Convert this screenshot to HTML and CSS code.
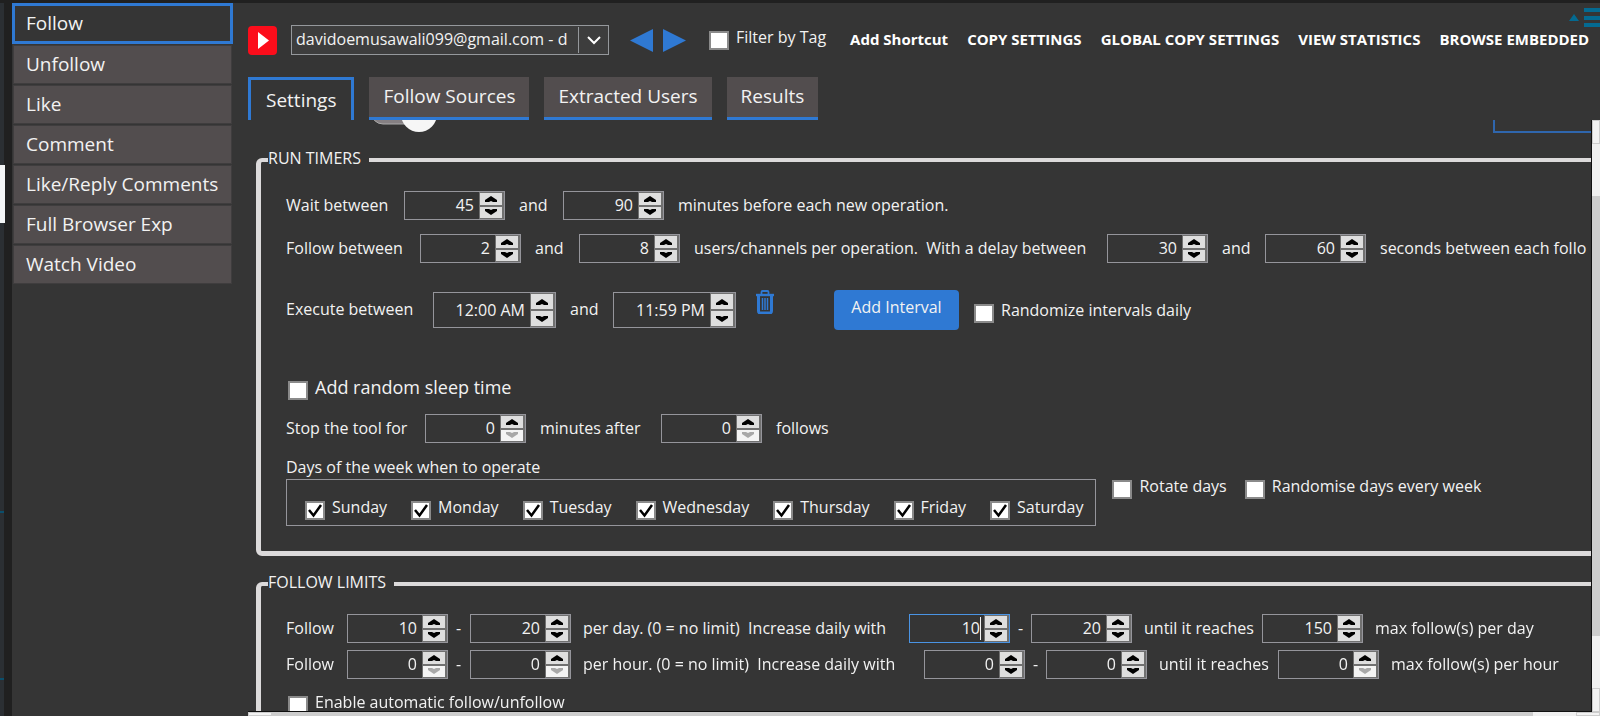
FILE: index.html
```html
<!DOCTYPE html>
<html lang="en">
<head>
<meta charset="utf-8">
<title>Follow settings</title>
<link rel="stylesheet" href="styles.css">
</head>
<body>
<div class="window">
  <div class="edge"><i class="edge-tab"></i><i class="edge-mark"></i><i class="edge-mark edge-mark-low"></i></div>
  <nav class="tools">
    <button class="tool tool-active">Follow</button>
    <button class="tool">Unfollow</button>
    <button class="tool">Like</button>
    <button class="tool">Comment</button>
    <button class="tool">Like/Reply Comments</button>
    <button class="tool">Full Browser Exp</button>
    <button class="tool">Watch Video</button>
  </nav>
  <main class="main">
    <header class="bar">
      <svg class="logo" viewBox="0 0 29 29"><rect width="29" height="29" rx="4" fill="#fc0d1b"/><path d="M10 6l11 8.500-11 8.500z" fill="#fff"/></svg>
      <select class="account" aria-label="Account"><option>davidoemusawali099@gmail.com - d</option></select>
      <div class="arrows">
        <button class="plain" aria-label="Previous account"><svg width="23" height="23" viewBox="0 0 23 23"><path d="M23 0v23L0 11.500z" fill="#2f79d3"/></svg></button>
        <button class="plain" aria-label="Next account"><svg width="23" height="23" viewBox="0 0 23 23"><path d="M0 0v23l23-11.500z" fill="#2f79d3"/></svg></button>
      </div>
      <label class="check check-filter"><input type="checkbox"><span>Filter by Tag</span></label>
      <div class="actions">
        <button class="plain">Add Shortcut</button>
        <button class="plain">COPY SETTINGS</button>
        <button class="plain">GLOBAL COPY SETTINGS</button>
        <button class="plain">VIEW STATISTICS</button>
        <button class="plain">BROWSE EMBEDDED</button>
      </div>
      <button class="plain menu" aria-label="Menu"><svg width="31" height="20" viewBox="0 0 31 20"><path d="M0 13l5-7 5 7zM15 0h16v4H15zM15 8h16v4H15zM15 15h16v4H15z" fill="#046a91"/></svg></button>
    </header>
    <div class="tabs">
      <button class="tab tab-active">Settings</button>
      <button class="tab">Follow Sources</button>
      <button class="tab">Extracted Users</button>
      <button class="tab">Results</button>
    </div>
    <div class="pane">
      <div class="content">
        <div class="above">
          <svg width="70" height="14" viewBox="0 0 70 14"><rect x="0" y="-20" width="50" height="24" rx="12" fill="#858083" stroke="#aaa"/><circle cx="48" cy="-6" r="18" fill="#f6f6f6"/></svg>
          <div class="box-end"></div>
        </div>
        <fieldset class="group timers">
          <legend>RUN TIMERS</legend>
          <div class="row row-wait">
            <label for="w1">Wait between</label><span class="spin"><input id="w1" value="45"><button aria-label="Up"></button><button class="down" aria-label="Down"></button></span>
            <label for="w2">and</label><span class="spin"><input id="w2" value="90"><button aria-label="Up"></button><button class="down" aria-label="Down"></button></span>
            <span>minutes before each new operation.</span>
          </div>
          <div class="row row-users">
            <label for="u1">Follow between</label><span class="spin"><input id="u1" value="2"><button aria-label="Up"></button><button class="down" aria-label="Down"></button></span>
            <label for="u2">and</label><span class="spin"><input id="u2" value="8"><button aria-label="Up"></button><button class="down" aria-label="Down"></button></span>
            <label for="u3">users/channels per operation.&nbsp; With a delay between</label><span class="spin"><input id="u3" value="30"><button aria-label="Up"></button><button class="down" aria-label="Down"></button></span>
            <label for="u4">and</label><span class="spin"><input id="u4" value="60"><button aria-label="Up"></button><button class="down" aria-label="Down"></button></span>
            <span>seconds between each follo</span>
          </div>
          <div class="row row-execute">
            <label for="e1">Execute between</label><span class="spin spin-time"><input id="e1" value="12:00 AM"><button aria-label="Up"></button><button class="down" aria-label="Down"></button></span>
            <label for="e2">and</label><span class="spin spin-time"><input id="e2" value="11:59 PM"><button aria-label="Up"></button><button class="down" aria-label="Down"></button></span>
            <button class="plain trash" aria-label="Delete interval"><svg width="18" height="24" viewBox="0 0 18 24" fill="none" stroke="#2f79d3"><path d="M0 5h18" stroke-width="2.400"/><path d="M5.500 4V2q0-1 1-1h5q1 0 1 1v2" stroke-width="1.800"/><path d="M2.500 6v15q0 2 2 2h9q2 0 2-2V6" stroke-width="3"/><path d="M6.500 8v12M9 8v12M11.500 8v12" stroke-width="1.500"/></svg></button>
            <button class="add">Add Interval</button>
            <label class="check"><input type="checkbox"><span>Randomize intervals daily</span></label>
          </div>
          <label class="check check-sleep"><input type="checkbox"><span>Add random sleep time</span></label>
          <div class="row row-stop">
            <label for="s1">Stop the tool for</label><span class="spin"><input id="s1" value="0"><button aria-label="Up"></button><button class="down" disabled aria-label="Down"></button></span>
            <label for="s2">minutes after</label><span class="spin"><input id="s2" value="0"><button aria-label="Up"></button><button class="down" disabled aria-label="Down"></button></span>
            <span>follows</span>
          </div>
          <p class="caption">Days of the week when to operate</p>
          <div class="week">
            <div class="days">
              <label class="check"><input type="checkbox" checked><span>Sunday</span></label>
              <label class="check"><input type="checkbox" checked><span>Monday</span></label>
              <label class="check"><input type="checkbox" checked><span>Tuesday</span></label>
              <label class="check"><input type="checkbox" checked><span>Wednesday</span></label>
              <label class="check"><input type="checkbox" checked><span>Thursday</span></label>
              <label class="check"><input type="checkbox" checked><span>Friday</span></label>
              <label class="check"><input type="checkbox" checked><span>Saturday</span></label>
            </div>
            <div class="week-options">
              <label class="check"><input type="checkbox"><span>Rotate days</span></label>
              <label class="check"><input type="checkbox"><span>Randomise days every week</span></label>
            </div>
          </div>
        </fieldset>
        <fieldset class="group limits">
          <legend>FOLLOW LIMITS</legend>
          <div class="row row-day">
            <label for="d1">Follow</label><span class="spin"><input id="d1" value="10"><button aria-label="Up"></button><button class="down" aria-label="Down"></button></span>
            <label class="dash" for="d2">-</label><span class="spin"><input id="d2" value="20"><button aria-label="Up"></button><button class="down" aria-label="Down"></button></span>
            <label for="d3">per day. (0 = no limit)&nbsp; Increase daily with</label><span class="spin spin-edit"><input id="d3" value="10" autofocus><button aria-label="Up"></button><button class="down" aria-label="Down"></button></span>
            <label class="dash" for="d4">-</label><span class="spin"><input id="d4" value="20"><button aria-label="Up"></button><button class="down" aria-label="Down"></button></span>
            <label for="d5">until it reaches</label><span class="spin"><input id="d5" value="150"><button aria-label="Up"></button><button class="down" aria-label="Down"></button></span>
            <span>max follow(s) per day</span>
          </div>
          <div class="row row-hour">
            <label for="h1">Follow</label><span class="spin"><input id="h1" value="0"><button aria-label="Up"></button><button class="down" disabled aria-label="Down"></button></span>
            <label class="dash" for="h2">-</label><span class="spin"><input id="h2" value="0"><button aria-label="Up"></button><button class="down" disabled aria-label="Down"></button></span>
            <label for="h3">per hour. (0 = no limit)&nbsp; Increase daily with</label><span class="spin"><input id="h3" value="0"><button aria-label="Up"></button><button class="down" aria-label="Down"></button></span>
            <label class="dash" for="h4">-</label><span class="spin"><input id="h4" value="0"><button aria-label="Up"></button><button class="down" aria-label="Down"></button></span>
            <label for="h5">until it reaches</label><span class="spin"><input id="h5" value="0"><button aria-label="Up"></button><button class="down" disabled aria-label="Down"></button></span>
            <span>max follow(s) per hour</span>
          </div>
          <label class="check check-auto"><input type="checkbox"><span>Enable automatic follow/unfollow</span></label>
        </fieldset>
      </div>
      <div class="vscroll"><i class="cap"></i><i class="free"></i><i class="thumb"></i><i class="free"></i><i class="cap"></i></div>
      <div class="hscroll"><i class="cap"></i><i class="thumb"></i><i class="free"></i><i class="cap"></i></div>
    </div>
  </main>
</div>
<script src="caret.js"></script>
</body>
</html>
```
FILE: caret.js
```
const field = document.getElementById("d3");
field.focus();
field.setSelectionRange(2, 2);
```
FILE: styles.css
```css
* { box-sizing: border-box; }
body { margin: 0; background: #353535; color: #f2f2f2; font: 16px/24px "Open Sans", "Noto Sans", sans-serif; overflow: hidden; }
button, input, select { font: inherit; color: inherit; margin: 0; padding: 0; border: 0; border-radius: 0; background: none; }
fieldset { margin: 0; min-width: 0; }
p { margin: 0; }

.window { display: flex; height: 100vh; border-top: 3px solid #202020; }
.edge { position: relative; flex: none; width: 12px; background: linear-gradient(90deg, #2b2f33 4px, #202020 4px); }
.edge-tab { position: absolute; left: 0; top: 162px; width: 5px; height: 58px; background: #f4f6f7; }
.edge-mark { position: absolute; left: 0; top: 508px; width: 4px; height: 2px; background: #0b4f6c; }
.edge-mark-low { top: 675px; }

.tools { display: flex; flex-direction: column; flex: none; width: 221px; gap: 3px; }
.tool { height: 37px; margin: 0 2px; padding: 0 12px 2px; background: #524d4e; text-align: left; font-size: 19px; line-height: 34px; white-space: nowrap; outline: 1px solid #3f3d3e; }
.tool-active { height: 41px; margin: 0 0 -1px; padding: 0 11px 2px; border: 3px solid #2f79d3; background: none; outline: 0; }

.main { display: flex; flex-direction: column; flex: 1; min-width: 0; padding-left: 15px; }
.bar { display: flex; flex: none; align-items: flex-start; height: 74px; padding-top: 22px; position: relative; white-space: nowrap; }
.logo { flex: none; width: 29px; height: 29px; margin-top: 1px; }
.account { flex: none; width: 318px; height: 30px; margin-left: 14px; padding: 0 30px 2px 4px; border: 1px solid #95989c; background: #3d3d3d url("data:image/svg+xml,%3Csvg xmlns='http://www.w3.org/2000/svg' width='30' height='28'%3E%3Cpath d='M0 1v26' stroke='%2395989c' stroke-width='2'/%3E%3Cpath d='M10 11l6 6 6-6' fill='none' stroke='%23fff' stroke-width='2'/%3E%3C/svg%3E") no-repeat right center; appearance: none; }
.arrows { display: flex; gap: 10px; margin: 4px 23px 0 21px; }
.plain { display: block; }
.plain svg { display: block; }
.actions { display: flex; gap: 19px; margin: 2px 0 0 24px; font-size: 15px; font-weight: 700; color: #fff; }
.menu { position: absolute; right: 0; top: 5px; }

.check { display: flex; align-items: flex-start; white-space: nowrap; }
.check input { flex: none; width: 20px; height: 19px; margin: 6px 7px 0 0; border: 2px solid #8a8a8a; background: #fff; appearance: none; }
.check input:checked { background: #fff url("data:image/svg+xml,%3Csvg xmlns='http://www.w3.org/2000/svg' width='16' height='15'%3E%3Cpath d='M2 7l4.500 5.500L14 2' fill='none' stroke='%23000' stroke-width='2.500'/%3E%3C/svg%3E") no-repeat center; }

.tabs { display: flex; flex: none; gap: 15px; font-size: 19px; }
.tab { height: 43px; padding: 0 14px 2px; background: #524d4e; border-bottom: 3px solid #2f79d3; }
.tab-active { padding: 0 15px 1px; background: none; border: 3px solid #2f79d3; border-bottom: 0; }

.pane { display: grid; flex: 1; min-height: 0; grid-template: minmax(0, 1fr) 4px / minmax(0, 1fr) 8px; }
.content { overflow: hidden; border: solid #101010; border-width: 0 1px 1px 0; white-space: nowrap; }
.above { display: flex; justify-content: space-between; height: 26px; padding-left: 123px; }
.box-end { width: 98px; height: 13px; border: solid #2f66ad; border-width: 0 0 2px 2px; }

.group { display: flex; flex-direction: column; align-items: flex-start; margin: 0 -20px 0 8px; padding: 0 0 0 25px; border: 5px solid #dcdadb; border-top-width: 4px; border-radius: 6px; }
.group legend { margin-left: -18px; padding: 0 8px 4px 0; }
.timers { height: 410px; padding-top: 17px; }
.limits { height: 200px; margin-top: 14px; padding-top: 16px; }

.row { display: grid; align-items: center; }
.row > label:not(.check), .row > span:not(.spin) { padding-bottom: 2px; }
.row-wait { grid-template-columns: 118px 101px 58px 101px auto; margin-bottom: 14px; }
.row-users { grid-template-columns: 134px 101px 58px 101px 427px 101px 57px 101px auto; margin-bottom: 27px; }
.row-execute { grid-template-columns: 147px 123px 57px 123px 98px 140px auto; margin-bottom: 45px; }
.row-stop { grid-template-columns: 139px 101px 135px 101px auto; margin: 14px 0 12px; }
.row-day { grid-template-columns: 61px 101px 22px 101px 338px 101px 21px 101px 130px 101px auto; margin-bottom: 7px; }
.row-hour { grid-template-columns: 61px 101px 22px 101px 353px 101px 21px 101px 131px 101px auto; margin-bottom: 11px; }
.row > .spin + label, .row > .spin + span { padding-left: 14px; }
.limits .row > .spin + label, .limits .row > .spin + span { padding-left: 12px; }
.limits .row > .spin + .dash { padding-left: 8px; }

.spin { display: grid; grid-template: 1fr 1fr / 1fr 22px; gap: 2px 4px; height: 29px; padding: 1px 2px 1px 1px; border: 1px solid #95959b; background: linear-gradient(270deg, #707070 25px, #353535 25px); }
.spin input { grid-row: span 2; width: 100%; min-width: 0; height: 23px; align-self: center; padding: 0 2px 1px 0; text-align: right; outline: 0; }
.spin:focus-within { border-color: #4a94e4; }
.spin-edit input { padding-right: 0; border-right: 1px solid #f2f2f2; caret-color: transparent; }
.spin button { background: #dedede url("data:image/svg+xml,%3Csvg xmlns='http://www.w3.org/2000/svg' width='12' height='6'%3E%3Cpath d='M0 6V4l6-4 6 4v2H8L6 5 4 6z'/%3E%3C/svg%3E") no-repeat center; }
.spin .down { background-image: url("data:image/svg+xml,%3Csvg xmlns='http://www.w3.org/2000/svg' width='12' height='6'%3E%3Cpath d='M0 0v2l6 4 6-4V0H8L6 1 4 0z'/%3E%3C/svg%3E"); }
.spin .down:disabled { background-color: #f4f4f4; background-image: url("data:image/svg+xml,%3Csvg xmlns='http://www.w3.org/2000/svg' width='12' height='6'%3E%3Cpath d='M0 0v2l6 4 6-4V0H8L6 1 4 0z' fill='%23a8a8a8'/%3E%3C/svg%3E"); }
.spin-time { height: 36px; }

.trash { align-self: start; margin: 0 0 0 20px; }
.add { width: 125px; height: 40px; padding-bottom: 6px; border-radius: 4px; background: #2f79d3; align-self: start; }
.check-sleep { font-size: 18px; margin-left: 2px; }
.check-auto { margin-left: 2px; }
.week { display: flex; }
.days { display: flex; gap: 24px; height: 47px; padding: 15px 12px 0 18px; border: 1px solid #95959b; }
.week-options { display: flex; gap: 18px; margin: -5px 0 0 16px; }

.vscroll { display: flex; flex-direction: column; }
.hscroll { display: flex; grid-column: span 2; }
.cap { flex: none; background: #f2f2f2; border: 1px solid #cdcdcd; }
.free { background: #f0f0f0; }
.thumb { background: #cdcdcd; }
.vscroll .cap { height: 24px; }
.vscroll .free { flex: 51; }
.vscroll .thumb { flex: 427; }
.hscroll .cap { width: 24px; }
.hscroll .free { flex: 43; }
.hscroll .thumb { flex: 1251; }
```
